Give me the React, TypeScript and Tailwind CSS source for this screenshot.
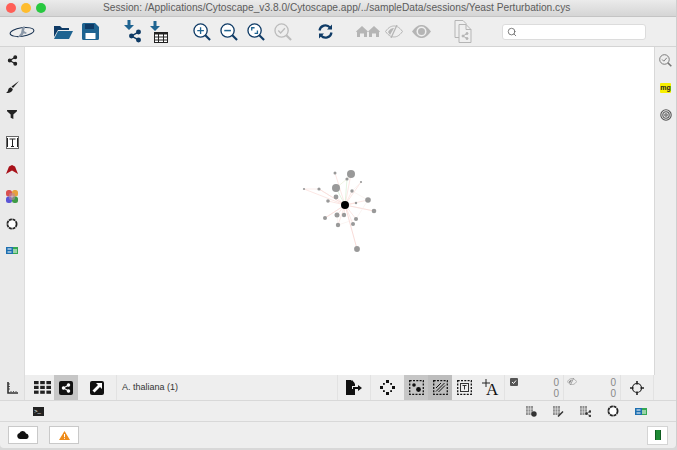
import React from 'react';
import { Share2, Search } from 'lucide-react';

const NAVY = '#0f3b66';
const BLUE = '#1f6491';
const FONT = { fontFamily: '"Liberation Sans", Arial, sans-serif' };

const NODES: [number, number, number][] = [
  [351, 174, 4], [335, 173, 1.5], [347, 179, 1.6], [361, 182, 1.1], [336, 188, 4],
  [304, 189, 1.1], [319, 189, 1.6], [352, 191, 1.7], [336, 197, 2.4], [328, 201, 1.8],
  [368, 200, 2.8], [356, 203, 1.2], [374, 211, 2.3], [337, 215, 2.5], [344, 215, 2.2],
  [325, 218, 2], [356, 219, 2], [353, 224, 2], [338, 225, 2.2], [357, 249, 2.9],
];

const Network = () => (
  <svg viewBox="25 47 629 328" className="block w-full h-full">
    {NODES.map(([x, y], i) => (
      <line key={i} x1={345} y1={205} x2={x} y2={y} stroke={i === 4 || i === 2 ? '#d8eed4' : '#f9dcd9'} strokeWidth={i === 19 ? 1 : 0.7} />
    ))}
    <polyline points="304,189 319,189 345,205" fill="none" stroke="#f6d8d5" strokeWidth="0.5" />
    <polyline points="325,218 345,205 374,211" fill="none" stroke="#f6d8d5" strokeWidth="0.5" />
    <polyline points="336,188 347,179 351,174" fill="none" stroke="#e3e8c8" strokeWidth="0.5" />
    <polyline points="361,182 352,191 368,200 356,219 338,225 337,215" fill="none" stroke="#f7ebe6" strokeWidth="0.5" />
    {NODES.map(([x, y, r], i) => (
      <circle key={i} cx={x} cy={y} r={r} fill="#999999" />
    ))}
    <circle cx={345} cy={205} r={4} fill="#000" />
  </svg>
);

const Logo = () => (
  <svg width="26" height="16" viewBox="0 0 26 16">
    <ellipse cx="13" cy="8" rx="12" ry="4.2" fill="none" stroke="#16304f" strokeWidth="1" transform="rotate(-8 13 8)" />
    <path d="M8 14 12 9l1-5 2-2 1 1-1 4 3 2-2 1-1-1-2 3z" fill="#8b98a8" />
  </svg>
);

const Folder = () => (
  <svg width="19" height="16" viewBox="0 0 19 16">
    <path d="M0 2h6l2 2h7v2H4L0 13z" fill={NAVY} />
    <path d="M4 7h15l-4 8H0z" fill={BLUE} />
  </svg>
);

const Save = () => (
  <svg width="17" height="17" viewBox="0 0 17 17">
    <path d="M0 1.500A1.500 1.500 0 0 1 1.500 0H13l4 4v11.500a1.500 1.500 0 0 1-1.500 1.500h-14A1.500 1.500 0 0 1 0 15.500z" fill={BLUE} />
    <rect x="3" y="1" width="9" height="5" fill={NAVY} />
    <rect x="3.500" y="10" width="10" height="6" fill="#fff" />
  </svg>
);

const DownArrow = () => (
  <svg width="10" height="10" viewBox="0 0 10 10">
    <path d="M3.500 0h3v5H10L5 10 0 5h3.500z" fill={BLUE} />
  </svg>
);

const ImportNet = () => (
  <div className="flex flex-col items-center w-[18px]">
    <div className="-ml-2"><DownArrow /></div>
    <Share2 size={14} fill={NAVY} color={NAVY} strokeWidth={2.5} className="ml-1 -mt-[1px]" />
  </div>
);

const ImportTable = () => (
  <div className="flex flex-col items-center w-[18px]">
    <div className="-ml-2"><DownArrow /></div>
    <svg width="14" height="11" viewBox="0 0 14 11" className="ml-1 mt-[1px]">
      <rect x="0.500" y="0.500" width="13" height="10" fill="#fff" stroke="#222" />
      <rect x="0" y="0" width="14" height="2.500" fill="#222" />
      <path d="M0 5h14M0 8h14M4.500 2v9M9.500 2v9" stroke="#222" />
    </svg>
  </div>
);

const Zoom = ({ kind, color = NAVY, size = 18 }: { kind: 'in' | 'out' | 'fit' | 'sel'; color?: string; size?: number }) => (
  <svg width={size} height={size} viewBox="0 0 19 19">
    <circle cx="8" cy="8" r="7" fill="#fff" fillOpacity={kind === 'sel' ? 0 : 1} stroke={color} strokeWidth="1.400" />
    <path d="M13 13l5 5" stroke={color} strokeWidth="2.200" />
    {kind === 'in' && <path d="M4.500 8h7M8 4.500v7" stroke={BLUE} strokeWidth="1.400" />}
    {kind === 'out' && <path d="M4.500 8h7" stroke={BLUE} strokeWidth="1.600" />}
    {kind === 'fit' && <path d="M5 8V5h3M11 8v3H8" fill="none" stroke={BLUE} strokeWidth="1.400" />}
    {kind === 'sel' && <path d="M4.500 8l2.500 2.500 4.500-5" fill="none" stroke={color} strokeWidth="1.400" />}
  </svg>
);

const Refresh = () => (
  <svg width="15" height="15" viewBox="0 0 15 15" fill="none" stroke={NAVY} strokeWidth="2.200">
    <path d="M1.500 6.500A6 6 0 0 1 12 3.500" />
    <path d="M13.500 8.500A6 6 0 0 1 3 11.500" />
    <path d="M14 0.500v5h-5zM1 14.500v-5h5z" fill={NAVY} stroke="none" />
  </svg>
);

const Homes = () => (
  <svg width="24" height="11" viewBox="0 0 24 11" fill="#b5b5b5">
    <path d="M0 5.500 6 0l6 5.500-1 .8V11H8V7.500H4V11H1V6.300zM12 5.500 18 0l6 5.500-1 .8V11h-3V7.500h-4V11h-3V6.300z" />
  </svg>
);

const EyeOff = ({ size = 18, color = '#b5b5b5' }: { size?: number; color?: string }) => (
  <svg width={size} height={size * 0.72} viewBox="0 0 18 13" fill="none">
    <path d="M0.500 6.500C4 1.500 7 1 9 1s5 .5 8.500 5.500C14 11.500 11 12 9 12S4 11.500 .5 6.500z" stroke={color} strokeWidth="1" />
    <path d="M3 7c2-3 4-4 6-4l-4 7z" fill={color} />
    <path d="M12 0 6 13" stroke={color} strokeWidth="1.300" />
  </svg>
);

const Eye = () => (
  <svg width="19" height="13" viewBox="0 0 19 13">
    <path d="M0 6.500C4 1 7 0 9.500 0S15 1 19 6.500C15 12 12 13 9.500 13S4 12 0 6.500z" fill="#b5b5b5" />
    <circle cx="9.500" cy="6.500" r="5" fill="#efefef" />
    <circle cx="9.500" cy="6.500" r="3.500" fill="#b5b5b5" />
  </svg>
);

const DocShare = () => (
  <svg width="18" height="23" viewBox="0 0 18 23" fill="#efefef" stroke="#b5b5b5">
    <path d="M1 .5h8l3 3v14H1z" />
    <path d="M5 4.500h7l5 5v13H5z" />
    <path d="M12 4.500v5h5" fill="none" />
    <path d="M9 16l4-2.500M9 16l4 2.500" />
    <circle cx="9" cy="16" r="1" fill="#b5b5b5" />
    <circle cx="13" cy="13.500" r="1" fill="#b5b5b5" />
    <circle cx="13" cy="18.500" r="1" fill="#b5b5b5" />
  </svg>
);

const Brush = () => (
  <svg width="13" height="13" viewBox="0 0 13 13" fill="#222">
    <path d="M13 0 7 7l-1.500-1.500z" />
    <path d="M5 6.500 6.800 8C6.500 11 3 12.500 0 12c1.500-1 2-2 2.300-3.500.4-1.500 1.500-2 2.700-2z" />
  </svg>
);

const Funnel = () => (
  <svg width="10" height="9" viewBox="0 0 11 10" fill="#222">
    <path d="M0 0h11v1.500L7 5v5L4 8.500V5L0 1.500z" />
  </svg>
);

const TextBox = () => (
  <svg width="13" height="13" viewBox="0 0 13 13">
    <rect x="0.500" y="0.500" width="12" height="12" fill="#fff" stroke="#666" />
    <path d="M3.500 3h6M6.500 3v7.500M5 10.500h3" stroke="#222" fill="none" />
    <path d="M1.500 2v9M11.500 2v9" stroke="#222" fill="none" />
  </svg>
);

const RedArrow = () => (
  <svg width="12" height="9" viewBox="0 0 12 9">
    <path d="M0 9 3 1.500 6 0l3 1.500L12 9 6 5.500z" fill="#a8121a" />
  </svg>
);

const ColorGrid = () => (
  <svg width="12" height="13" viewBox="0 0 12 13">
    <rect x="0" y="0" width="6" height="6.500" rx="2.500" fill="#d95050" />
    <rect x="6" y="0" width="6" height="6.500" rx="2.500" fill="#e8a13c" />
    <rect x="0" y="6.500" width="6" height="6.500" rx="2.500" fill="#5b55d6" />
    <rect x="6" y="6.500" width="6" height="6.500" rx="2.500" fill="#3d9a46" />
    <rect x="3" y="3" width="6" height="7" rx="2" fill="#b98aa0" fillOpacity="0.6" />
  </svg>
);

const Cluster = () => (
  <svg width="12" height="12" viewBox="0 0 12 12">
    <circle cx="6" cy="6" r="4.600" fill="#fff" stroke="#222" strokeWidth="1.800" strokeDasharray="3 0.600" />
  </svg>
);

const EmLogo = () => (
  <svg width="12" height="7" viewBox="0 0 12 7">
    <rect x="0" y="0" width="7" height="7" fill="#1d6fb0" />
    <rect x="7" y="0" width="5" height="7" fill="#35a852" />
    <path d="M1.500 2h4M1.500 5h4M8 2v4M10 2v4" stroke="#fff" strokeWidth="1" />
  </svg>
);

const MgBadge = () => (
  <div className="w-[11px] h-[10px] bg-[#f7f000] rounded-[1px] flex items-center justify-center text-[7px] leading-none font-bold text-[#222]">
    mg
  </div>
);

const Spiral = () => (
  <svg width="12" height="12" viewBox="0 0 12 12" fill="none" stroke="#555" strokeWidth="1.100">
    <circle cx="6" cy="6" r="5.200" />
    <circle cx="6" cy="6" r="3.200" />
    <circle cx="6" cy="6" r="1.200" />
  </svg>
);

const SideIcon = ({ children }: { children: React.ReactNode }) => (
  <div className="h-[27.2px] flex items-center justify-center">{children}</div>
);

const Ruler = () => (
  <svg width="11" height="12" viewBox="0 0 11 12" fill="none" stroke="#333">
    <path d="M1 0v11h10" strokeWidth="1.600" />
    <path d="M1 2h2M1 4.500h2M1 7h2M4 10V9M6.500 10V9M9 10V9" strokeWidth="0.800" />
  </svg>
);

const Dots = () => (
  <svg width="17" height="13" viewBox="0 0 17 13" fill="#222">
    {[0, 4.800, 9.600].map(y => [0, 6.200, 12.400].map(x => <rect key={`${x}-${y}`} x={x} y={y} width="4.600" height="3.200" />))}
  </svg>
);

const BlackSquare = ({ children }: { children: React.ReactNode }) => (
  <div className="w-[14px] h-[14px] bg-[#111] rounded-[2px] flex items-center justify-center">{children}</div>
);

const Arrow45 = () => (
  <svg width="10" height="10" viewBox="0 0 10 10" fill="#fff">
    <path d="M4 0h6v6L8 4 2.500 9.500.5 7.500 6 2z" />
  </svg>
);

const ExportDoc = () => (
  <svg width="16" height="15" viewBox="0 0 16 15" fill="#111">
    <path d="M0 0h5l4 4v2H6v3h3v6H0z" />
    <path d="M6 0l3 3.500H6z" />
    <path d="M7 7h5V5l4 3-4 3V9H7z" />
  </svg>
);

const Diamond = () => (
  <svg width="15" height="15" viewBox="0 0 15 15" fill="#111">
    <rect x="6" y="0" width="3" height="3" />
    <rect x="6" y="12" width="3" height="3" />
    <rect x="0" y="6" width="3" height="3" />
    <rect x="12" y="6" width="3" height="3" />
    <rect x="3" y="3" width="1.800" height="1.800" />
    <rect x="10.200" y="3" width="1.800" height="1.800" />
    <rect x="3" y="10.200" width="1.800" height="1.800" />
    <rect x="10.200" y="10.200" width="1.800" height="1.800" />
  </svg>
);

const DashedBox = ({ kind }: { kind: 'nodes' | 'edges' | 'ann' }) => (
  <svg width="15" height="15" viewBox="0 0 15 15">
    <rect x="0.700" y="0.700" width="13.600" height="13.600" fill="none" stroke="#111" strokeWidth="1.300" strokeDasharray="2 1.300" />
    {kind === 'nodes' && (
      <g fill="#111">
        <circle cx="5" cy="5" r="1.800" />
        <circle cx="9.500" cy="9.500" r="2.400" />
      </g>
    )}
    {kind === 'edges' && <path d="M3 8 8 3M3 11.500 11.500 3M5.500 12 12 5.500" stroke="#111" strokeWidth="1" />}
    {kind === 'ann' && (
      <g fill="none" stroke="#333">
        <rect x="3.500" y="3.500" width="8" height="8" />
        <path d="M5.500 5.500h4M7.500 5.500v4" />
      </g>
    )}
  </svg>
);

const MoveText = () => (
  <div className="relative w-[16px] h-[17px]">
    <svg width="8" height="8" viewBox="0 0 8 8" stroke="#222" fill="none" className="absolute left-0 top-0">
      <path d="M4 0v8M0 4h8" />
    </svg>
    <span className="absolute left-[4px] top-[2px] text-[17px] leading-[17px] text-[#111]" style={{ fontFamily: '"Liberation Serif", serif' }}>A</span>
  </div>
);

const Target = () => (
  <svg width="14" height="14" viewBox="0 0 14 14" fill="none" stroke="#222" strokeWidth="1.200">
    <circle cx="7" cy="7" r="4.500" />
    <path d="M7 0v3.500M7 10.500V14M0 7h3.500M10.500 7H14" strokeWidth="1.600" />
  </svg>
);

const TableIcon = ({ kind }: { kind: 'node' | 'edit' | 'net' }) => (
  <svg width="11" height="11" viewBox="0 0 11 11">
    <path d="M0 0h7v9H0z" fill="#8f8f8f" />
    <path d="M2.300 0v9M4.600 0v9M0 3h7M0 6h7" stroke="#efefef" strokeWidth="0.600" />
    {kind === 'node' && <circle cx="8" cy="8" r="2.700" fill="#333" />}
    {kind === 'edit' && <path d="M5 10.500 10 5.500" stroke="#333" strokeWidth="1.500" />}
    {kind === 'net' && (
      <g fill="#333" stroke="#333" strokeWidth="0.600">
        <path d="M6.500 7.500 10 5.500M6.500 7.500l3.500 2.500" />
        <circle cx="6.500" cy="7.500" r="1" />
        <circle cx="10" cy="5.500" r="1" />
        <circle cx="10" cy="10" r="1" />
      </g>
    )}
  </svg>
);

const StatusButton = ({ children }: { children: React.ReactNode }) => (
  <div className="w-[30px] h-[18px] bg-white border border-[#c9c9c9] flex items-center justify-center">{children}</div>
);

export default function App() {
  return (
    <div className="w-[677px] h-[450px] bg-[#d8d8d8] overflow-hidden" style={FONT}>
      <div className="h-[448px] w-[677px] flex flex-col bg-[#eeeeee] rounded-b-[4px] border-r border-[#cfcfcf]">
        {/* Title bar */}
        <div className="h-[17px] shrink-0 flex items-center pl-[6px] bg-gradient-to-b from-[#ebebeb] to-[#d5d5d5] border-b border-[#c4c4c4]">
          <div className="flex gap-[5px] w-[97px]">
            <span className="w-[10px] h-[10px] rounded-full bg-[#ff5f57]" />
            <span className="w-[10px] h-[10px] rounded-full bg-[#febc2e]" />
            <span className="w-[10px] h-[10px] rounded-full bg-[#28c840]" />
          </div>
          <span className="text-[10.2px] leading-none text-[#5c5c5c] whitespace-nowrap">
            Session: /Applications/Cytoscape_v3.8.0/Cytoscape.app/../sampleData/sessions/Yeast Perturbation.cys
          </span>
        </div>

        {/* Toolbar */}
        <div className="h-[30px] shrink-0 flex items-center border-b border-[#d4d4d4] pl-[9px]">
          <div className="w-[45px]"><Logo /></div>
          <div className="w-[28px]"><Folder /></div>
          <div className="w-[42px]"><Save /></div>
          <div className="w-[26px]"><ImportNet /></div>
          <div className="w-[43px]"><ImportTable /></div>
          <div className="flex gap-[9px] w-[125px]">
            <Zoom kind="in" />
            <Zoom kind="out" />
            <Zoom kind="fit" />
            <Zoom kind="sel" color="#bcbcbc" />
          </div>
          <div className="w-[38px]"><Refresh /></div>
          <div className="w-[29px]"><Homes /></div>
          <div className="w-[27px]"><EyeOff /></div>
          <div className="w-[42px]"><Eye /></div>
          <div className="w-[48px]"><DocShare /></div>
          <div className="w-[144px] h-[16px] bg-white border border-[#dcdcdc] rounded-[3px] flex items-center pl-[4px]">
            <Search size={10} color="#666" />
          </div>
        </div>

        {/* Main */}
        <div className="flex-1 min-h-0 flex">
          <div className="w-[25px] shrink-0 flex flex-col bg-[#eaeaea] border-r border-[#dddddd]">
            <SideIcon><Share2 size={11} fill="#222" color="#222" strokeWidth={2.5} /></SideIcon>
            <SideIcon><Brush /></SideIcon>
            <SideIcon><Funnel /></SideIcon>
            <SideIcon><TextBox /></SideIcon>
            <SideIcon><RedArrow /></SideIcon>
            <SideIcon><ColorGrid /></SideIcon>
            <SideIcon><Cluster /></SideIcon>
            <SideIcon><EmLogo /></SideIcon>
          </div>
          <div className="flex-1 min-w-0 bg-white"><Network /></div>
          <div className="w-[22px] shrink-0 flex flex-col border-l border-[#d8d8d8]">
            <SideIcon><Zoom kind="sel" color="#777777" size={13} /></SideIcon>
            <SideIcon><MgBadge /></SideIcon>
            <SideIcon><Spiral /></SideIcon>
          </div>
        </div>

        {/* Network view bar */}
        <div className="h-[26px] shrink-0 flex border-b border-[#d8d8d8]">
          <div className="w-[25px] flex items-center justify-center bg-[#eaeaea] border-r border-[#dddddd]"><Ruler /></div>
          <div className="w-[29px] flex items-center justify-center pl-[6px]"><Dots /></div>
          <div className="w-[24px] flex items-center justify-center bg-[#c6c6c6]">
            <BlackSquare><Share2 size={10} color="#fff" fill="#fff" strokeWidth={2.5} /></BlackSquare>
          </div>
          <div className="w-[39px] flex items-center justify-center border-r border-[#e2e2e2]"><BlackSquare><Arrow45 /></BlackSquare></div>
          <div className="w-[220px] flex items-center pl-[5px] text-[9px] text-[#333]">A. thaliana (1)</div>
          <div className="w-[33px] flex items-center justify-center border-l border-[#e2e2e2]"><ExportDoc /></div>
          <div className="w-[34px] flex items-center justify-center border-l border-[#e2e2e2]"><Diamond /></div>
          <div className="w-[24px] flex items-center justify-center bg-[#c6c6c6]"><DashedBox kind="nodes" /></div>
          <div className="w-[24px] flex items-center justify-center bg-[#bdbdbd]"><DashedBox kind="edges" /></div>
          <div className="w-[24px] flex items-center justify-center"><DashedBox kind="ann" /></div>
          <div className="w-[28px] flex items-center justify-center"><MoveText /></div>
          <div className="w-[116px] flex border-l border-[#e2e2e2] text-[10px] leading-[11px] text-[#888]">
            <div className="w-[59px] pt-[2px] pl-[5px] pr-[4px] flex justify-between border-r border-[#e2e2e2]">
              <svg width="8" height="8" viewBox="0 0 8 8" className="mt-[1px]">
                <rect width="8" height="8" rx="1" fill="#555" />
                <path d="M2 4l1.500 1.500L6 2.500" stroke="#fff" fill="none" />
              </svg>
              <div className="text-right"><div>0</div><div>0</div></div>
            </div>
            <div className="flex-1 pt-[2px] pl-[3px] pr-[4px] flex justify-between">
              <div className="mt-[1px]"><EyeOff size={10} color="#888" /></div>
              <div className="text-right"><div>0</div><div>0</div></div>
            </div>
          </div>
          <div className="w-[34px] flex items-center justify-center border-x border-[#e2e2e2]"><Target /></div>
        </div>

        {/* Panel bar */}
        <div className="h-[21px] shrink-0 flex items-center border-b border-[#d8d8d8] pl-[33px] pr-[29px]">
          <div className="w-[11px] h-[9px] bg-[#222] flex items-center pl-[1px] text-white text-[6px] leading-none mr-auto">&gt;_</div>
          <div className="flex items-center gap-[16px]">
            <TableIcon kind="node" />
            <TableIcon kind="edit" />
            <TableIcon kind="net" />
            <Cluster />
            <EmLogo />
          </div>
        </div>

        {/* Status bar */}
        <div className="h-[26px] shrink-0 flex items-center px-[8px] gap-[11px]">
          <StatusButton>
            <svg width="12" height="8" viewBox="0 0 12 8" fill="#111">
              <path d="M3 8a3 3 0 0 1-.5-5.900A3.500 3.500 0 0 1 9 2.500 2.800 2.800 0 0 1 9.500 8z" />
            </svg>
          </StatusButton>
          <StatusButton>
            <svg width="11" height="9" viewBox="0 0 11 9">
              <path d="M5.500 0 11 9H0z" fill="#ef8c1a" />
              <path d="M5.500 3v3M5.500 6.800v1" stroke="#fff" />
            </svg>
          </StatusButton>
          <div className="ml-auto w-[21px] h-[19px] bg-white border border-[#d4d4d4] flex items-center justify-center">
            <div className="w-[6px] h-[10px] bg-[#1e8a34] border-x border-[#0f5c20]" />
          </div>
        </div>
      </div>
    </div>
  );
}
